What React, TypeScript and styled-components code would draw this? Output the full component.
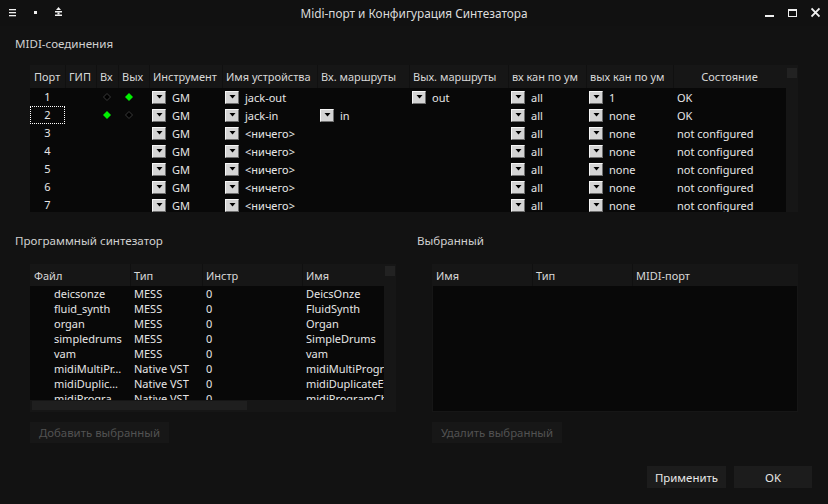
import React from 'react';
import styled, { createGlobalStyle } from 'styled-components';

const GlobalStyle = createGlobalStyle`
  html, body { margin: 0; padding: 0; background: #121212; }
  body {
    font-family: "Noto Sans", "Open Sans", sans-serif;
    font-size: 11px;
    color: #dedede;
  }
  * { box-sizing: border-box; }
`;

const MIDI_COLS = '35px 31px 22px 31px 73px 95px 92px 99px 78px 87px 113px';
const SYNTH_COLS = '100px 72px 100px 160px';
const SEL_COLS = '99px 100px 1fr';

const Window = styled.div`
  width: 828px;
  height: 504px;
  background: #121212;
  display: flex;
  flex-direction: column;
  overflow: hidden;
`;

const TitleBar = styled.div`
  flex: none;
  height: 26px;
  display: grid;
  grid-template-columns: 1fr auto 1fr;
  background: #111111;
`;

const TitleIcons = styled.div<{ $side: 'left' | 'right' }>`
  display: flex;
  align-items: flex-start;
  justify-content: ${p => (p.$side === 'left' ? 'flex-start' : 'flex-end')};
  gap: ${p => (p.$side === 'left' ? '18px' : '14px')};
  padding: ${p => (p.$side === 'left' ? '0 0 0 9px' : '0 8px 0 0')};
  svg { display: block; }
`;

const TitleText = styled.div`
  line-height: 26px;
  font-size: 11.8px;
  color: #dcdcdc;
  white-space: nowrap;
`;

const Content = styled.div`
  flex: 1;
  display: flex;
  flex-direction: column;
  padding: 10px 15px 0 15px;
`;

const SectionLabel = styled.div`
  line-height: 16px;
  font-size: 11.6px;
  color: #d0d0d0;
  white-space: nowrap;
`;

const SectionBody = styled.div<{ $top: number }>`
  margin-top: ${p => p.$top}px;
  padding: 0 15px;
  display: flex;
  flex-direction: column;
  align-items: flex-start;
`;

const BottomRow = styled.div`
  margin-top: 21px;
  display: grid;
  grid-template-columns: 396px 396px;
  column-gap: 6px;
`;

const Group = styled.div`
  display: flex;
  flex-direction: column;
`;

/* ---------- MIDI table ---------- */

const MidiFrame = styled.div`
  width: 768px;
  height: 147px;
  display: grid;
  grid-template-columns: 756px 12px;
  grid-template-rows: 23px 124px;
  background: #161616;
`;

const HeaderRow = styled.div<{ $cols: string }>`
  display: grid;
  grid-template-columns: ${p => p.$cols};
  align-items: stretch;
  overflow: hidden;
`;

const HeaderCell = styled.div<{ $center?: boolean; $pad?: number }>`
  display: flex;
  align-items: center;
  justify-content: ${p => (p.$center ? 'center' : 'flex-start')};
  padding-left: ${p => (p.$center ? 0 : p.$pad ?? 4)}px;
  color: #d8d8d8;
  white-space: nowrap;
  overflow: hidden;
  & + & { box-shadow: inset 1px 0 0 #101010; }
`;

const ScrollCorner = styled.div<{ $top: number }>`
  padding: ${p => p.$top}px 1px 0 1px;
  &::before {
    content: '';
    display: block;
    width: 10px;
    height: 10px;
    background: #222222;
  }
`;

const TableBody = styled.div`
  background: #080808;
  overflow: hidden;
`;

const MidiRow = styled.div`
  display: grid;
  grid-template-columns: ${MIDI_COLS};
  height: 18px;
`;

const Cell = styled.div<{ $pad?: number }>`
  display: flex;
  align-items: center;
  padding-left: ${p => p.$pad ?? 4}px;
  white-space: nowrap;
  overflow: hidden;
  color: #e6e6e6;
`;

const PortCell = styled.div<{ $focus?: boolean }>`
  display: flex;
  align-items: center;
  justify-content: center;
  padding-bottom: 2px;
  color: #e6e6e6;
  outline: ${p => (p.$focus ? '1px dotted #ffffff' : 'none')};
  outline-offset: -1px;
`;

const ComboButton = styled.span`
  flex: none;
  width: 14px;
  height: 13px;
  margin-right: 6px;
  background: #d4d4d4;
  border: 1px solid;
  border-color: #f6f6f6 #6e6e6e #6e6e6e #f6f6f6;
  display: flex;
  align-items: center;
  justify-content: center;
  svg { display: block; }
`;

const Empty = styled.div``;

/* ---------- Synth tables ---------- */

const SynthFrame = styled.div`
  width: 366px;
  height: 148px;
  display: grid;
  grid-template-columns: 354px 12px;
  grid-template-rows: 22px 114px 12px;
  background: #161616;
`;

const SynthRow = styled.div`
  display: grid;
  grid-template-columns: ${SYNTH_COLS};
  height: 15px;
`;

const HScroll = styled.div`
  padding: 1px 0 0 2px;
`;

const HScrollHandle = styled.div<{ $w: number }>`
  width: ${p => p.$w}px;
  height: 9px;
  background: #1f1f1f;
`;

const SelectedFrame = styled.div`
  width: 366px;
  height: 148px;
  display: grid;
  grid-template-rows: 22px 1fr;
  padding: 0 1px 1px 1px;
  background: #161616;
`;

/* ---------- Buttons ---------- */

const Button = styled.button<{ $w: number; $h?: number; $disabled?: boolean }>`
  width: ${p => p.$w}px;
  height: ${p => p.$h ?? 22}px;
  padding: 0;
  border: none;
  border-radius: 0;
  font: inherit;
  font-size: 11.4px;
  background: ${p => (p.$disabled ? '#171717' : '#1c1c1c')};
  color: ${p => (p.$disabled ? '#525252' : '#e8e8e8')};
  white-space: nowrap;
`;

const SmallButtonWrap = styled.div`
  margin-top: 10px;
`;

const Footer = styled.div`
  margin-top: 23px;
  display: flex;
  justify-content: flex-end;
  gap: 8px;
  padding-right: 1px;
`;

/* ---------- Icons ---------- */

const DownArrow = () => (
  <svg width="7" height="4" viewBox="0 0 7 4">
    <polygon points="0.5,0 6.5,0 3.5,3.5" fill="#000" />
  </svg>
);

const Diamond = ({ on }: { on: boolean }) => (
  <svg width="8" height="8" viewBox="0 0 8 8">
    {on ? (
      <polygon points="4,0 8,4 4,8 0,4" fill="#00f000" />
    ) : (
      <polygon points="4,0.5 7.5,4 4,7.5 0.5,4" fill="#000" stroke="#3a3a3a" strokeWidth="1" />
    )}
  </svg>
);

const MenuIcon = () => (
  <svg width="7" height="26" viewBox="0 0 7 26">
    <rect x="0" y="9" width="7" height="1.3" fill="#f0f0f0" />
    <rect x="0" y="12" width="7" height="1.3" fill="#f0f0f0" />
    <rect x="0" y="15" width="7" height="1.3" fill="#f0f0f0" />
  </svg>
);

const DotIcon = () => (
  <svg width="3" height="26" viewBox="0 0 3 26">
    <rect x="0" y="11" width="3" height="3" fill="#f0f0f0" />
  </svg>
);

const KeepAboveIcon = () => (
  <svg width="7" height="26" viewBox="0 0 7 26">
    <polygon points="3.5,7 6,10 1,10" fill="#f0f0f0" />
    <rect x="0" y="11" width="7" height="1.5" fill="#f0f0f0" />
    <rect x="2.5" y="12.5" width="2" height="2" fill="#f0f0f0" />
    <rect x="0" y="14.5" width="7" height="1.5" fill="#f0f0f0" />
  </svg>
);

const MinIcon = () => (
  <svg width="9" height="26" viewBox="0 0 9 26">
    <rect x="0" y="15" width="9" height="2" fill="#f0f0f0" />
  </svg>
);

const MaxIcon = () => (
  <svg width="9" height="26" viewBox="0 0 9 26">
    <rect x="0.5" y="9.5" width="8" height="7" fill="none" stroke="#f0f0f0" strokeWidth="1" />
    <rect x="0" y="9" width="9" height="2" fill="#f0f0f0" />
  </svg>
);

const CloseIcon = () => (
  <svg width="9" height="26" viewBox="0 0 9 26">
    <path d="M0.5 8.5 L8.5 16.5 M8.5 8.5 L0.5 16.5" stroke="#f0f0f0" strokeWidth="1.8" />
  </svg>
);

/* ---------- Data ---------- */

type Led = 'on' | 'off' | null;
interface MidiPort {
  port: string;
  inLed: Led;
  outLed: Led;
  instr: string;
  dev: string;
  inRoute: string | null;
  outRoute: string | null;
  inCh: string;
  outCh: string;
  state: string;
  focus?: boolean;
}

const midiPorts: MidiPort[] = [
  { port: '1', inLed: 'off', outLed: 'on', instr: 'GM', dev: 'jack-out', inRoute: null, outRoute: 'out', inCh: 'all', outCh: '1', state: 'OK' },
  { port: '2', inLed: 'on', outLed: 'off', instr: 'GM', dev: 'jack-in', inRoute: 'in', outRoute: null, inCh: 'all', outCh: 'none', state: 'OK', focus: true },
  ...['3', '4', '5', '6', '7'].map(p => ({
    port: p, inLed: null as Led, outLed: null as Led, instr: 'GM', dev: '<ничего>', inRoute: null, outRoute: null,
    inCh: 'all', outCh: 'none', state: 'not configured',
  })),
];

const synths = [
  ['deicsonze', 'MESS', '0', 'DeicsOnze'],
  ['fluid_synth', 'MESS', '0', 'FluidSynth'],
  ['organ', 'MESS', '0', 'Organ'],
  ['simpledrums', 'MESS', '0', 'SimpleDrums'],
  ['vam', 'MESS', '0', 'vam'],
  ['midiMultiPr…', 'Native VST', '0', 'midiMultiProgramIn'],
  ['midiDuplic…', 'Native VST', '0', 'midiDuplicateEvents'],
  ['midiProgra…', 'Native VST', '0', 'midiProgramChange'],
];

const Combo = ({ value }: { value: string | null }) =>
  value === null ? <Empty /> : (
    <Cell $pad={3}>
      <ComboButton><DownArrow /></ComboButton>
      {value}
    </Cell>
  );

const LedCell = ({ led }: { led: Led }) => (
  <Cell $pad={7}>{led && <Diamond on={led === 'on'} />}</Cell>
);

export default function App() {
  return (
    <>
      <GlobalStyle />
      <Window>
        <TitleBar>
          <TitleIcons $side="left">
            <MenuIcon />
            <DotIcon />
            <KeepAboveIcon />
          </TitleIcons>
          <TitleText>Midi-порт и Конфигурация Синтезатора</TitleText>
          <TitleIcons $side="right">
            <MinIcon />
            <MaxIcon />
            <CloseIcon />
          </TitleIcons>
        </TitleBar>

        <Content>
          <SectionLabel>MIDI-соединения</SectionLabel>
          <SectionBody $top={13}>
            <MidiFrame>
              <HeaderRow $cols={MIDI_COLS}>
                <HeaderCell>Порт</HeaderCell>
                <HeaderCell>ГИП</HeaderCell>
                <HeaderCell>Вх</HeaderCell>
                <HeaderCell>Вых</HeaderCell>
                <HeaderCell>Инструмент</HeaderCell>
                <HeaderCell>Имя устройства</HeaderCell>
                <HeaderCell>Вх. маршруты</HeaderCell>
                <HeaderCell>Вых. маршруты</HeaderCell>
                <HeaderCell>вх кан по ум</HeaderCell>
                <HeaderCell>вых кан по ум</HeaderCell>
                <HeaderCell $center>Состояние</HeaderCell>
              </HeaderRow>
              <ScrollCorner $top={3} />
              <TableBody>
                {midiPorts.map(r => (
                  <MidiRow key={r.port}>
                    <PortCell $focus={r.focus}>{r.port}</PortCell>
                    <Empty />
                    <LedCell led={r.inLed} />
                    <LedCell led={r.outLed} />
                    <Combo value={r.instr} />
                    <Combo value={r.dev} />
                    <Combo value={r.inRoute} />
                    <Combo value={r.outRoute} />
                    <Combo value={r.inCh} />
                    <Combo value={r.outCh} />
                    <Cell>{r.state}</Cell>
                  </MidiRow>
                ))}
              </TableBody>
              <Empty />
            </MidiFrame>
          </SectionBody>

          <BottomRow>
            <Group>
              <SectionLabel>Программный синтезатор</SectionLabel>
              <SectionBody $top={15}>
                <SynthFrame>
                  <HeaderRow $cols={SYNTH_COLS}>
                    <HeaderCell>Файл</HeaderCell>
                    <HeaderCell>Тип</HeaderCell>
                    <HeaderCell>Инстр</HeaderCell>
                    <HeaderCell>Имя</HeaderCell>
                  </HeaderRow>
                  <ScrollCorner $top={2} />
                  <TableBody>
                    {synths.map(s => (
                      <SynthRow key={s[0]}>
                        <Cell $pad={24}>{s[0]}</Cell>
                        <Cell>{s[1]}</Cell>
                        <Cell>{s[2]}</Cell>
                        <Cell>{s[3]}</Cell>
                      </SynthRow>
                    ))}
                  </TableBody>
                  <Empty />
                  <HScroll><HScrollHandle $w={215} /></HScroll>
                  <Empty />
                </SynthFrame>
                <SmallButtonWrap>
                  <Button $w={139} $h={21} $disabled>Добавить выбранный</Button>
                </SmallButtonWrap>
              </SectionBody>
            </Group>

            <Group>
              <SectionLabel>Выбранный</SectionLabel>
              <SectionBody $top={15}>
                <SelectedFrame>
                  <HeaderRow $cols={SEL_COLS}>
                    <HeaderCell $pad={3}>Имя</HeaderCell>
                    <HeaderCell>Тип</HeaderCell>
                    <HeaderCell>MIDI-порт</HeaderCell>
                  </HeaderRow>
                  <TableBody />
                </SelectedFrame>
                <SmallButtonWrap>
                  <Button $w={130} $h={21} $disabled>Удалить выбранный</Button>
                </SmallButtonWrap>
              </SectionBody>
            </Group>
          </BottomRow>

          <Footer>
            <Button $w={79}>Применить</Button>
            <Button $w={78}>OK</Button>
          </Footer>
        </Content>
      </Window>
    </>
  );
}
